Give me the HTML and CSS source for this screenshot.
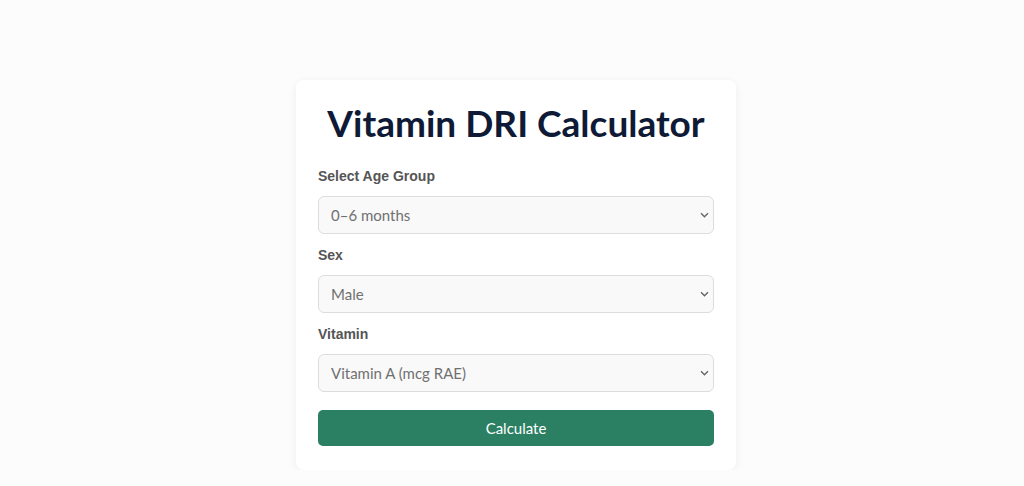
FILE: index.html
```html
<!DOCTYPE html>
<html lang="en">
<head>
  <meta charset="UTF-8">
  <meta name="viewport" content="width=device-width, initial-scale=1">
  <title>Vitamin DRI Calculator</title>
  <link rel="stylesheet" href="styles.css">
</head>
<body>

  <div class="calculator">
    <h1>Vitamin DRI Calculator</h1>

    <label for="age">Select Age Group</label>
    <select id="age">
      <option>0–6 months</option>
      <option>7–12 months</option>
      <option>1–3 years</option>
      <option>4–8 years</option>
    </select>

    <label for="sex">Sex</label>
    <select id="sex">
      <option>Male</option>
      <option>Female</option>
    </select>

    <label for="vitamin">Vitamin</label>
    <select id="vitamin">
      <option>Vitamin A (mcg RAE)</option>
      <option>Vitamin C (mg)</option>
      <option>Vitamin D (mcg)</option>
    </select>

    <button type="button">Calculate</button>
  </div>

</body>
</html>
```

FILE: styles.css
```css
/* Reset */
* { box-sizing: border-box; margin: 0; padding: 0; }

body {
  background: #fcfcfc;
  font-family: Lato, 'Noto Sans', sans-serif;
  padding: 80px 0 0 8px;
}

/* Card */
.calculator {
  width: 440px;
  margin: 0 auto;
  padding: 18px 22px 24px;
  background: #fff;
  border-radius: 8px;
  box-shadow: 0 2px 10px rgba(0,0,0,0.06);
  display: flex;
  flex-direction: column;
}

h1 {
  font-size: 37px;
  font-weight: 700;
  color: #0e1a36;
  text-align: center;
  line-height: 50px;
  margin-bottom: 20px;
  white-space: nowrap;
}

label {
  font-family: 'Liberation Sans', Arial, sans-serif;
  font-size: 14px;
  font-weight: bold;
  color: #555;
  line-height: 17px;
  margin-bottom: 11px;
}

select {
  -webkit-appearance: none;
  appearance: none;
  height: 38px;
  padding: 0 12px;
  border: 1px solid #ddd;
  border-radius: 6px;
  background-color: #f9f9f9;
  background-image: url("data:image/svg+xml,%3Csvg xmlns='http://www.w3.org/2000/svg' width='9' height='6' viewBox='0 0 9 6'%3E%3Cpath d='M1 1.2l3.5 3.5 3.5-3.5' fill='none' stroke='%23666' stroke-width='1.4'/%3E%3C/svg%3E");
  background-repeat: no-repeat;
  background-position: right 4px center;
  font-family: Lato, sans-serif;
  font-size: 15px;
  color: #707070;
  margin-bottom: 13px;
}

button {
  margin-top: 5px;
  height: 36px;
  border: none;
  border-radius: 5px;
  background: #2b7f62;
  color: #fff;
  font-family: Lato, sans-serif;
  font-size: 15px;
  cursor: pointer;
}
```
